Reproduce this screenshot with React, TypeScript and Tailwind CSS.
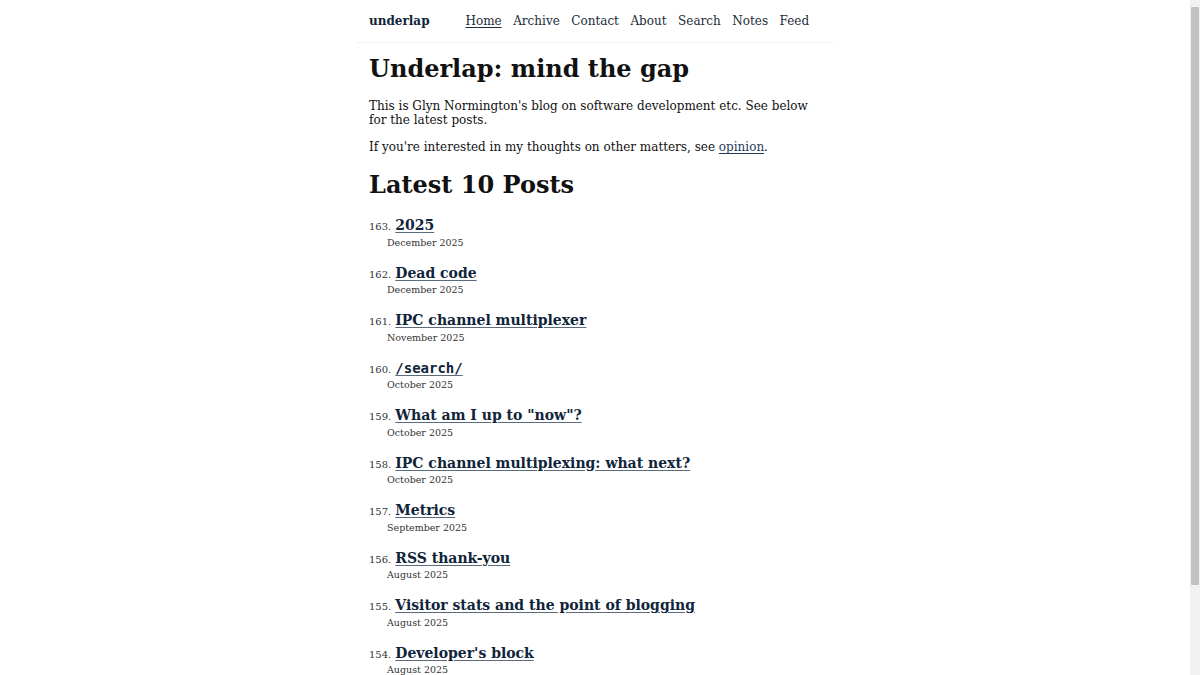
const nav = ["Home", "Archive", "Contact", "About", "Search", "Notes", "Feed"];

const posts: { n: number; title: string; date: string; mono?: boolean }[] = [
  { n: 163, title: "2025", date: "December 2025" },
  { n: 162, title: "Dead code", date: "December 2025" },
  { n: 161, title: "IPC channel multiplexer", date: "November 2025" },
  { n: 160, title: "/search/", date: "October 2025", mono: true },
  { n: 159, title: 'What am I up to "now"?', date: "October 2025" },
  { n: 158, title: "IPC channel multiplexing: what next?", date: "October 2025" },
  { n: 157, title: "Metrics", date: "September 2025" },
  { n: 156, title: "RSS thank-you", date: "August 2025" },
  { n: 155, title: "Visitor stats and the point of blogging", date: "August 2025" },
  { n: 154, title: "Developer's block", date: "August 2025" },
];

export default function App() {
  return (
    <div className="flex h-screen overflow-hidden bg-white font-['DejaVu_Serif',serif] text-[#111]">
      <div className="flex-1 overflow-hidden">
        <div className="mx-auto w-[476px]">
          {/* Header */}
          <header className="flex h-[43px] items-center border-b border-dotted border-[#e6e6e6] px-3">
            <a className="text-[12px] font-bold text-[#10243a]">underlap</a>
            <nav className="ml-[36px] flex gap-[11.5px] text-[12px] text-[#1c2b3a]">
              {nav.map((n, i) => (
                <a key={n} className={i === 0 ? "underline underline-offset-2" : ""}>
                  {n}
                </a>
              ))}
            </nav>
          </header>

          <main className="px-3 pb-[100px]">
            <h1 className="mt-[12px] text-[24px] leading-[28px] font-bold">Underlap: mind the gap</h1>
            <p className="mt-[16px] text-[12px] leading-[14px]">
              This is Glyn Normington's blog on software development etc. See below for the latest posts.
            </p>
            <p className="mt-[13px] text-[12px] leading-[14px]">
              If you're interested in my thoughts on other matters, see{" "}
              <a className="text-[#1f3a5a] underline underline-offset-2">opinion</a>.
            </p>

            <h2 className="mt-[17px] text-[24px] leading-[28px] font-bold">Latest 10 Posts</h2>

            {/* Posts */}
            <ol className="mt-[16px] flex flex-col gap-[14px]">
              {posts.map((p) => (
                <li key={p.n}>
                  <div className="flex h-[20px] items-baseline gap-[4px] leading-[20px]">
                    <span className="text-[10px] text-[#333]">{p.n}.</span>
                    <a
                      className={
                        p.mono
                          ? "font-['DejaVu_Sans_Mono',monospace] text-[14px] font-bold text-[#10243a] underline decoration-[#5b6b7c] underline-offset-2"
                          : "text-[14px] font-bold text-[#10243a] underline decoration-[#5b6b7c] underline-offset-2"
                      }
                    >
                      {p.title}
                    </a>
                  </div>
                  <div className="mt-[1.5px] pl-[18px] text-[9.5px] leading-[12px] text-[#333]">{p.date}</div>
                </li>
              ))}
            </ol>
          </main>
        </div>
      </div>

      {/* Scrollbar */}
      <div className="flex w-[10px] flex-col bg-[#f1f1f1] py-[7px]">
        <div className="mx-[1px] h-[578px] rounded-[1px] bg-[#c1c1c1]" />
      </div>
    </div>
  );
}
